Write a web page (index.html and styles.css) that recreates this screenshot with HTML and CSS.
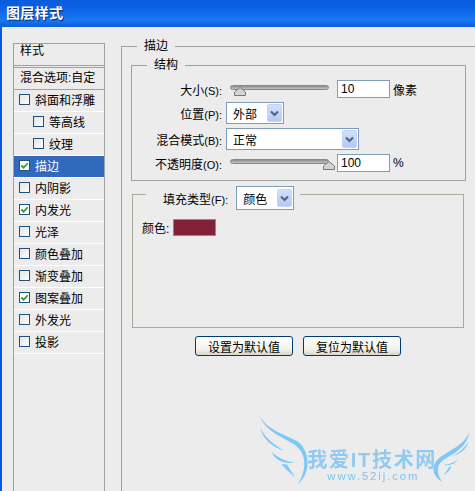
FILE: index.html
```html
<!DOCTYPE html>
<html lang="zh-CN">
<head>
    <meta charset="UTF-8">
    <title>图层样式</title>
    <link rel="stylesheet" href="styles.css">
</head>
<body>

    <div class="titlebar">图层样式</div>

    <div class="main">
        <div class="style-list">
            <div class="list-head">样式</div>
            <div class="list-blend">混合选项:自定</div>
            <div class="list-row"><span class="check"></span>斜面和浮雕</div>
            <div class="list-row nested"><span class="check"></span>等高线</div>
            <div class="list-row nested"><span class="check"></span>纹理</div>
            <div class="list-row active"><span class="check on"><svg viewBox="0 0 10 10"><path d="M1.5 5 L4 7.5 L8.5 2.5" /></svg></span>描边</div>
            <div class="list-row"><span class="check"></span>内阴影</div>
            <div class="list-row"><span class="check on"><svg viewBox="0 0 10 10"><path d="M1.5 5 L4 7.5 L8.5 2.5" /></svg></span>内发光</div>
            <div class="list-row"><span class="check"></span>光泽</div>
            <div class="list-row"><span class="check"></span>颜色叠加</div>
            <div class="list-row"><span class="check"></span>渐变叠加</div>
            <div class="list-row"><span class="check on"><svg viewBox="0 0 10 10"><path d="M1.5 5 L4 7.5 L8.5 2.5" /></svg></span>图案叠加</div>
            <div class="list-row"><span class="check"></span>外发光</div>
            <div class="list-row"><span class="check"></span>投影</div>
        </div>

        <div class="group outer">
            <div class="group-title outer-title">描边</div>

            <div class="group inner">
                <div class="group-title inner-title">结构</div>
                <div class="form-rows">
                    <div class="form-row h18">
                        <label class="form-label">大小<span class="latin">(S):</span></label>
                        <div class="slider"><svg class="thumb size-thumb" viewBox="0 0 12 9"><path d="M6 .5 L11.5 5 V8.5 H.5 V5 Z" /></svg></div>
                        <input class="num" type="text" value="10">
                        <span class="unit">像素</span>
                    </div>
                    <div class="form-row h22">
                        <label class="form-label">位置<span class="latin">(P):</span></label>
                        <div class="select short"><span>外部</span><span class="arrow"><svg viewBox="0 0 9 7"><path d="M1 1.5 L4.5 5 L8 1.5" /></svg></span></div>
                    </div>
                    <div class="form-row h22">
                        <label class="form-label">混合模式<span class="latin">(B):</span></label>
                        <div class="select long"><span>正常</span><span class="arrow"><svg viewBox="0 0 9 7"><path d="M1 1.5 L4.5 5 L8 1.5" /></svg></span></div>
                    </div>
                    <div class="form-row h18">
                        <label class="form-label">不透明度<span class="latin">(O):</span></label>
                        <div class="slider"><svg class="thumb opacity-thumb" viewBox="0 0 12 9"><path d="M6 .5 L11.5 5 V8.5 H.5 V5 Z" /></svg></div>
                        <input class="num" type="text" value="100">
                        <span class="unit">%</span>
                    </div>
                </div>
            </div>

            <div class="group fill">
                <div class="fill-title">
                    <label>填充类型<span class="latin">(F):</span></label>
                    <div class="select short fill-select"><span>颜色</span><span class="arrow"><svg viewBox="0 0 9 7"><path d="M1 1.5 L4.5 5 L8 1.5" /></svg></span></div>
                </div>
                <div class="color-row">
                    <span>颜色:</span>
                    <span class="swatch"></span>
                </div>
            </div>

            <div class="buttons">
                <button type="button">设置为默认值</button>
                <button type="button">复位为默认值</button>
            </div>
        </div>
    </div>

    <!-- watermark sits over the dialog -->
    <svg class="watermark" viewBox="0 0 705 273">
        <g class="wing">
            <path d="M58 45 C75 95 130 112 165 135 C197 157 205 205 172 255 C218 215 208 150 172 124 C128 100 80 90 58 45 Z" />
            <path d="M60 82 C68 118 98 142 132 153 C100 132 76 116 60 82 Z" />
            <path d="M95 155 C106 182 128 190 164 189 C140 182 118 178 95 155 Z" />
            <path d="M124 192 C136 205 146 218 165 230 C154 214 146 204 142 194 Z" />
            <path d="M688 97 C672 135 632 150 602 170 C574 190 572 225 606 245 C586 215 590 190 616 176 C652 156 682 135 688 97 Z" />
            <path d="M685 125 C672 146 656 160 636 169 C660 162 680 148 685 125 Z" />
            <path d="M655 178 C640 190 628 192 612 195 C630 198 645 192 655 178 Z" />
            <path d="M628 200 C622 210 618 216 610 226 C622 218 630 210 634 200 Z" />
        </g>
        <text class="wm-title" x="202" y="200" textLength="384">我爱IT技术网</text>
        <text class="wm-url" x="262" y="240" textLength="270">www.52ij.com</text>
    </svg>

</body>
</html>
```

FILE: styles.css
```css
/* Basic styles */
html, body {
    height: 100%;
}

body {
    margin: 0;
    padding: 0;
    position: relative;
    display: flex;
    flex-direction: column;
    overflow: hidden;
    background-color: #ececec;
    color: #000;
    font-family: "Liberation Sans", "Noto Sans CJK SC", sans-serif;
    font-size: 12px;
}

.latin {
    font-size: 11px;
}

.titlebar {
    height: 27px;
    line-height: 27px;
    padding-left: 6px;
    flex: none;
    background: linear-gradient(#0a5bdc, #0a62e8 30%, #1a78f2 75%, #0a5cd8);
    color: white;
    font-size: 14px;
    font-weight: bold;
    letter-spacing: 0.3px;
    text-shadow: 1px 1px 1px #0a2a70;
}

.main {
    flex: 1;
    display: flex;
    align-items: stretch;
    border-left: 2px solid #0a5ae0;
    min-height: 0;
}

/* Left list */
.style-list {
    width: 90px;
    flex: none;
    margin: 16px 16px 0 11px;
    border: 1px solid #a0a0a0;
    border-bottom: none;
}

.list-head {
    height: 21px;
    line-height: 14px;
    padding-left: 6px;
    border-bottom: 1px solid #a0a0a0;
    margin-bottom: 1px;
}

.list-blend {
    height: 21px;
    line-height: 20px;
    padding-left: 6px;
    border-top: 1px solid #a0a0a0;
    border-bottom: 1px solid #a0a0a0;
}

.list-row {
    height: 19px;
    display: flex;
    align-items: center;
    gap: 5px;
    padding: 0 0 2px 5px;
    border-bottom: 1px solid white;
}

.list-row.nested {
    padding-left: 19px;
}

.list-row.active {
    background-color: #3169bd;
    color: white;
}

.check {
    width: 9px;
    height: 9px;
    flex: none;
    border: 1px solid #1c5180;
    background: linear-gradient(135deg, #e6e6e0, #fbfbf9);
}

.check svg {
    display: block;
    width: 9px;
    height: 9px;
}

.check path {
    fill: none;
    stroke: #21a121;
    stroke-width: 2;
}

.check.on {
    background: white;
}

/* Group boxes */
.group {
    border: 1px solid #a0a0a0;
    box-sizing: border-box;
}

.group-title {
    width: fit-content;
    height: 16px;
    line-height: 16px;
    margin-top: -9px;
    background-color: #ececec;
}

.outer {
    flex: 1;
    min-width: 0;
    margin-top: 19px;
    border-right: none;
    border-bottom: none;
}

.outer-title {
    margin-left: 15px;
    padding: 0 7px;
}

.inner {
    width: 335px;
    margin: 11px 0 0 9px;
    padding-bottom: 8px;
}

.inner-title {
    margin-left: 15px;
    padding: 0 7px;
}

.form-rows {
    display: flex;
    flex-direction: column;
    gap: 4px;
    margin-top: 7px;
}

.form-row {
    display: flex;
    align-items: center;
}

.h18 {
    height: 18px;
}

.h22 {
    height: 22px;
}

.form-label {
    width: 90px;
    flex: none;
    text-align: right;
    margin-right: 4px;
}

.slider {
    position: relative;
    width: 97px;
    height: 3px;
    margin: -4px 8px 0 4px;
    border: 1px solid #888;
    border-radius: 3px;
    background: linear-gradient(#8c8c8c, #c4c4c4);
}

.thumb {
    position: absolute;
    top: 1px;
    width: 12px;
    height: 9px;
}

.thumb path {
    fill: #d4d4d4;
    stroke: #777;
}

.size-thumb {
    left: 3px;
}

.opacity-thumb {
    left: 92px;
}

.num {
    width: 53px;
    height: 18px;
    box-sizing: border-box;
    padding: 1px 3px;
    border: 1px solid #7f9db9;
    background-color: white;
    color: #000;
    font: inherit;
    outline: none;
}

.unit {
    margin-left: 3px;
}

.select {
    display: flex;
    align-items: center;
    justify-content: space-between;
    height: 22px;
    box-sizing: border-box;
    padding: 0 1px 0 6px;
    border: 1px solid #7f9db9;
    background-color: white;
}

.short {
    width: 58px;
}

.long {
    width: 133px;
}

.arrow {
    display: flex;
    align-items: center;
    justify-content: center;
    width: 15px;
    height: 18px;
    border: 1px solid #c4d4f4;
    border-radius: 2px;
    box-sizing: border-box;
    background: linear-gradient(#d4e0fa, #b4c8f6);
}

.arrow svg {
    width: 9px;
    height: 7px;
}

.arrow path {
    fill: none;
    stroke: #4d6185;
    stroke-width: 2;
}

/* Fill box */
.fill {
    width: 332px;
    height: 134px;
    margin: 13px 0 0 10px;
    border-color: #aca899;
}

.fill-title {
    display: flex;
    align-items: center;
    gap: 8px;
    width: fit-content;
    height: 24px;
    margin: -9px 0 0 13px;
    padding: 0 6px 0 17px;
    background-color: #ececec;
}

.fill-select {
    height: 24px;
}

.color-row {
    display: flex;
    align-items: center;
    gap: 4px;
    margin-top: 9px;
    padding-left: 9px;
}

.swatch {
    width: 43px;
    height: 17px;
    box-sizing: border-box;
    border: 1px solid #8c8c8c;
    background-color: #832136;
}

.buttons {
    display: flex;
    gap: 10px;
    margin-top: 8px;
    padding-left: 73px;
}

button {
    width: 98px;
    height: 20px;
    padding: 0;
    border: 1px solid #003c74;
    border-radius: 3px;
    background: linear-gradient(#fefefe, #f2f1ea 70%, #d8d6c8);
    color: #000;
    font: inherit;
    cursor: pointer;
}

/* Watermark */
.watermark {
    position: absolute;
    left: 240px;
    top: 400px;
    width: 235px;
    height: 91px;
    filter: blur(0.4px);
}

.wing path {
    fill: #7cc8f6;
}

.wm-title {
    fill: #6cbdf4;
    font-size: 60px;
    font-weight: bold;
    opacity: 0.7;
}

.wm-url {
    fill: #7cc4f2;
    font-size: 34px;
}
```
